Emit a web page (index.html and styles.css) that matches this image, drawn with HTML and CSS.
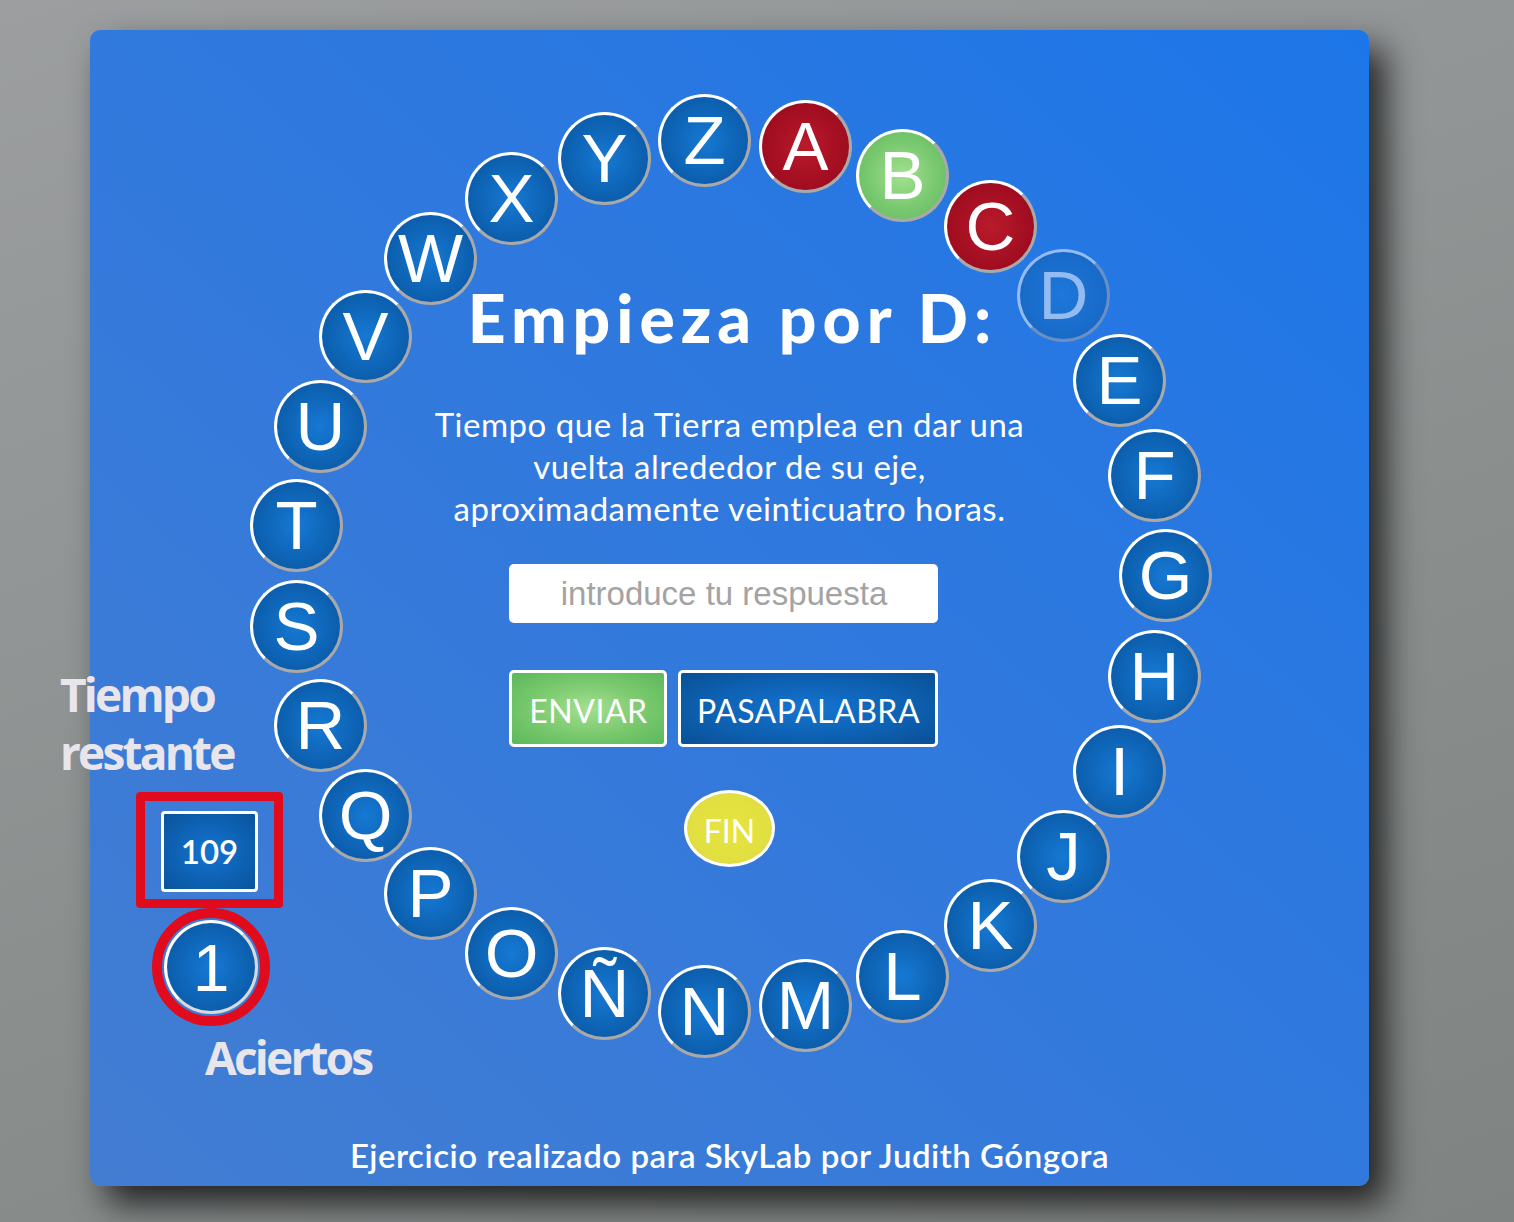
FILE: index.html
```html
<!DOCTYPE html>
<html lang="es">
<head>
<meta charset="utf-8">
<title>Pasapalabra</title>
<link rel="stylesheet" href="styles.css">
</head>
<body>
<div class="card">
  <div class="stage">
    <div class="ring">
      <span class="letter wrong" style="left:669px;top:70px">A</span>
      <span class="letter right" style="left:766px;top:99px">B</span>
      <span class="letter wrong" style="left:854px;top:150px">C</span>
      <span class="letter current" style="left:927px;top:219px">D</span>
      <span class="letter" style="left:983px;top:304px">E</span>
      <span class="letter" style="left:1018px;top:399px">F</span>
      <span class="letter" style="left:1029px;top:499px">G</span>
      <span class="letter" style="left:1018px;top:600px">H</span>
      <span class="letter" style="left:983px;top:695px">I</span>
      <span class="letter" style="left:927px;top:780px">J</span>
      <span class="letter" style="left:854px;top:849px">K</span>
      <span class="letter" style="left:766px;top:900px">L</span>
      <span class="letter" style="left:669px;top:929px">M</span>
      <span class="letter" style="left:568px;top:935px">N</span>
      <span class="letter" style="left:468px;top:917px">Ñ</span>
      <span class="letter" style="left:375px;top:877px">O</span>
      <span class="letter" style="left:294px;top:817px">P</span>
      <span class="letter" style="left:229px;top:739px">Q</span>
      <span class="letter" style="left:184px;top:649px">R</span>
      <span class="letter" style="left:160px;top:550px">S</span>
      <span class="letter" style="left:160px;top:449px">T</span>
      <span class="letter" style="left:184px;top:350px">U</span>
      <span class="letter" style="left:229px;top:260px">V</span>
      <span class="letter" style="left:294px;top:182px">W</span>
      <span class="letter" style="left:375px;top:122px">X</span>
      <span class="letter" style="left:468px;top:82px">Y</span>
      <span class="letter" style="left:568px;top:64px">Z</span>
    </div>

    <section class="question">
      <h1 class="question-title">Empieza por D:</h1>
      <p class="question-text">Tiempo que la Tierra emplea en dar una<br>vuelta alrededor de su eje,<br>aproximadamente veinticuatro horas.</p>
      <input class="answer" type="text" placeholder="introduce tu respuesta">
      <div class="actions">
        <button class="btn btn-send" type="button">ENVIAR</button>
        <button class="btn btn-pass" type="button">PASAPALABRA</button>
      </div>
      <button class="btn-end" type="button">FIN</button>
    </section>

    <aside class="stats">
      <div class="stats-label">Tiempo<br>restante</div>
      <div class="timer-frame"><div class="timer">109</div></div>
      <div class="score-ring"><div class="score">1</div></div>
      <div class="stats-label stats-hits">Aciertos</div>
    </aside>
  </div>
  <footer class="credit">Ejercicio realizado para SkyLab por Judith Góngora</footer>
</div>
</body>
</html>
```
FILE: styles.css
```css
html, body {
  margin: 0;
  padding: 0;
}

body {
  width: 1514px;
  height: 1222px;
  overflow: hidden;
  background: linear-gradient(160deg, #9c9ea0 0%, #8b908f 55%, #7f8482 100%);
  font-family: "Lato", "Liberation Sans", sans-serif;
}

.card {
  box-sizing: border-box;
  width: 1279px;
  height: 1156px;
  margin: 30px 0 0 90px;
  border-radius: 10px;
  background: linear-gradient(to bottom left, #1d76e8 0%, #3179dd 50%, #437dd2 100%);
  box-shadow: 16px 18px 34px rgba(0, 0, 0, 0.75);
  display: flex;
  flex-direction: column;
}

.stage {
  display: grid;
  height: 1104px;
}

.ring,
.question,
.stats {
  grid-area: 1 / 1;
}

.ring {
  position: relative;
}

.letter {
  position: absolute;
  width: 87px;
  height: 87px;
  border: 3px solid;
  border-color: #ffffff #a9a9a9 #a9a9a9 #ffffff;
  border-radius: 50%;
  background: radial-gradient(circle at center, #1679d4 0%, #0d61b1 62%, #0a549f 100%);
  color: #ffffff;
  font-family: "Liberation Sans", Arial, sans-serif;
  font-size: 69px;
  line-height: 88px;
  text-align: center;
}

.letter.wrong {
  background: radial-gradient(circle at center, #b91b2b 0%, #a30e21 60%, #970a1d 100%);
}

.letter.right {
  background: radial-gradient(circle at center, #a2e18e 0%, #79c86f 55%, #5db95c 100%);
}

.letter.current {
  opacity: 0.5;
}

.question {
  justify-self: center;
  display: flex;
  flex-direction: column;
  align-items: center;
  padding-top: 253px;
  color: #ffffff;
}

.question-title {
  margin: 0;
  font-size: 66px;
  line-height: 70px;
  font-weight: 900;
  letter-spacing: 6px;
  padding-left: 6px;
}

.question-text {
  margin: 50px 0 0;
  font-size: 33px;
  line-height: 42px;
  font-weight: 400;
  text-align: center;
  letter-spacing: 0.5px;
}

.answer {
  box-sizing: border-box;
  width: 429px;
  height: 59px;
  margin: 35px 11px 0 0;
  border: none;
  border-radius: 5px;
  background: #ffffff;
  font-family: "Liberation Sans", Arial, sans-serif;
  font-size: 33px;
  text-align: center;
  color: #333;
  outline: none;
}

.answer::placeholder {
  color: #a3a3a3;
}

.actions {
  display: flex;
  gap: 11px;
  margin: 47px 11px 0 0;
}

.btn {
  box-sizing: border-box;
  height: 77px;
  border: 3px solid #ffffff;
  border-radius: 5px;
  color: #ffffff;
  font-family: "Lato", sans-serif;
  font-size: 32px;
  font-weight: 400;
  letter-spacing: 0.5px;
  padding: 4px 0 0;
}

.btn-send {
  width: 158px;
  background: radial-gradient(ellipse at center, #a3df90 0%, #78c86c 55%, #5cb85c 100%);
}

.btn-pass {
  width: 260px;
  background: radial-gradient(ellipse at center, #1474d0 0%, #0d5fb0 60%, #0a4f93 100%);
}

.btn-end {
  box-sizing: border-box;
  width: 91px;
  height: 77px;
  margin-top: 43px;
  border: 3px solid #ffffff;
  border-radius: 50%;
  background: radial-gradient(ellipse at center, #e6e43e 0%, #e2e040 60%, #d8d44a 100%);
  color: #ffffff;
  font-family: "Lato", sans-serif;
  font-size: 32px;
  padding: 4px 0 0;
}

.stats {
  justify-self: start;
  align-self: start;
  display: flex;
  flex-direction: column;
  align-items: flex-start;
  margin: 635px 0 0 -30px;
}

.stats-label {
  color: #e8e6ec;
  font-family: "Open Sans", sans-serif;
  font-weight: 700;
  font-size: 46px;
  line-height: 58px;
  letter-spacing: -2.8px;
}

.timer-frame {
  margin: 11px 0 0 76px;
  padding: 10px 16px 7px;
  border: 9px solid #e00b1d;
  border-radius: 4px;
}

.timer {
  box-sizing: border-box;
  width: 97px;
  height: 81px;
  border: 3px solid #ffffff;
  border-radius: 4px;
  background: radial-gradient(ellipse at center, #1474d0 0%, #0d60b1 60%, #0a539c 100%);
  color: #ffffff;
  font-family: "Lato", sans-serif;
  font-size: 33px;
  font-weight: 600;
  line-height: 75px;
  text-align: center;
}

.score-ring {
  margin: 0 0 0 92px;
  padding: 2px;
  border: 10px solid #e00b1d;
  border-radius: 50%;
  background: #3a7bd9;
}

.score {
  box-sizing: border-box;
  width: 94px;
  height: 94px;
  border: 3px solid;
  border-color: #ffffff #d9d9d9 #d9d9d9 #ffffff;
  border-radius: 50%;
  background: radial-gradient(circle at center, #1679d4 0%, #0d61b1 62%, #0a549f 100%);
  color: #ffffff;
  font-family: "Liberation Sans", Arial, sans-serif;
  font-size: 66px;
  line-height: 90px;
  text-align: center;
}

.stats-hits {
  margin: 2px 0 0 145px;
}

.credit {
  color: #ffffff;
  font-size: 33px;
  line-height: 42px;
  font-weight: 600;
  letter-spacing: 0.5px;
  text-align: center;
}
```
